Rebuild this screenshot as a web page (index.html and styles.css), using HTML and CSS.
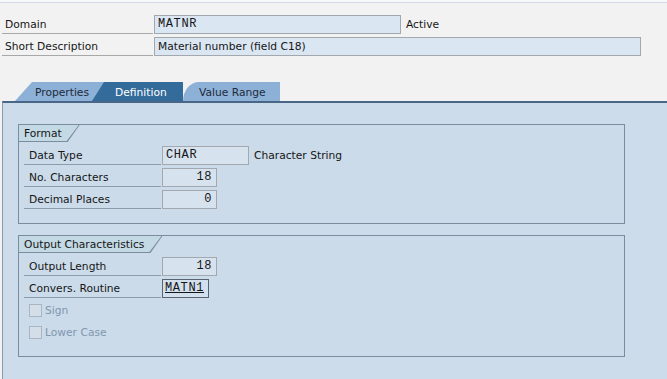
FILE: index.html
```html
<!DOCTYPE html>
<html>
<head>
<meta charset="utf-8">
<link rel="stylesheet" href="styles.css">
</head>
<body>
<div class="topline"></div>
<div class="header">
  <div class="hrow">
    <div class="hlabel">Domain</div>
    <div class="field mono w-domain">MATNR</div>
    <div class="after">Active</div>
  </div>
  <div class="hrow">
    <div class="hlabel">Short Description</div>
    <div class="field w-desc">Material number (field C18)</div>
  </div>
</div>
<div class="tabs">
  <div class="tab tab-props">Properties</div>
  <div class="tab tab-def">Definition</div>
  <div class="tab tab-val">Value Range</div>
</div>
<div class="panel">
  <div class="group g-format">
    <div class="gtitle"><span class="gtext">Format</span></div>
    <div class="grow">
      <div class="glabel">Data Type</div>
      <div class="field mono w-type">CHAR</div>
      <div class="after">Character String</div>
    </div>
    <div class="grow">
      <div class="glabel">No. Characters</div>
      <div class="field mono num w-num">18</div>
    </div>
    <div class="grow">
      <div class="glabel">Decimal Places</div>
      <div class="field mono num w-num">0</div>
    </div>
  </div>
  <div class="group g-output">
    <div class="gtitle"><span class="gtext">Output Characteristics</span></div>
    <div class="grow">
      <div class="glabel">Output Length</div>
      <div class="field mono num w-num">18</div>
    </div>
    <div class="grow">
      <div class="glabel">Convers. Routine</div>
      <div class="field mono link w-conv">MATN1</div>
    </div>
    <div class="grow">
      <div class="check"><span class="box"></span><span class="ctext">Sign</span></div>
    </div>
    <div class="grow">
      <div class="check"><span class="box"></span><span class="ctext">Lower Case</span></div>
    </div>
  </div>
</div>
</body>
</html>
```
FILE: styles.css
```css
html, body {
  margin: 0;
  padding: 0;
}
body {
  width: 667px;
  height: 379px;
  overflow: hidden;
  background: #f2f2f2;
  font-family: "DejaVu Sans", Tahoma, sans-serif;
  font-size: 10.7px;
  color: #161616;
}
.topline {
  height: 2px;
  background: #f6f8fa;
  border-bottom: 1px solid #d3dce6;
}
.header {
  padding: 12px 0 0 2px;
  display: flex;
  flex-direction: column;
  gap: 3px;
}
.hrow {
  display: flex;
  align-items: stretch;
  height: 19px;
}
.hlabel {
  width: 148px;
  padding-left: 3px;
  border-bottom: 1px solid #a8a8a8;
  line-height: 20px;
  margin-right: 1px;
}
.field {
  box-sizing: border-box;
  height: 19px;
  background: #dbe6f3;
  border: 1px solid #a2a8ae;
  line-height: 17px;
  padding: 0 3px;
  white-space: nowrap;
}
.mono {
  font-family: "Liberation Mono", "DejaVu Sans Mono", monospace;
  font-size: 12px;
  letter-spacing: 0.6px;
}
.w-domain { width: 247px; }
.w-desc { width: 487px; }
.after {
  line-height: 20px;
  padding-left: 5px;
}
.tabs {
  margin-top: 26px;
  height: 19px;
  display: flex;
  padding-left: 15px;
}
.tab {
  height: 19px;
  line-height: 21px;
  box-sizing: border-box;
  color: #1d2b3a;
  white-space: nowrap;
}
.tab-props {
  width: 90px;
  background: #8db0d6;
  padding-left: 20px;
  clip-path: polygon(17px 0, 100% 0, 100% 100%, 0 100%);
}
.tab-def {
  width: 91px;
  margin-left: -13px;
  background: #336b9b;
  color: #ffffff;
  padding-left: 23px;
  clip-path: polygon(12px 0, 100% 0, 100% 100%, 0 100%);
}
.tab-val {
  width: 97px;
  background: #8db0d6;
  padding-left: 16px;
  border-top-left-radius: 16px 19px;
}
.panel {
  margin-left: 2px;
  height: 278px;
  background: #cddcea;
  border-top: 2px solid #4a6686;
  border-left: 1px solid #8c9aa8;
  padding: 21px 0 0 15px;
  box-sizing: border-box;
  display: flex;
  flex-direction: column;
  gap: 11px;
}
.group {
  width: 607px;
  box-sizing: border-box;
  border: 1px solid #7b8c9e;
  background: #cbdbe9;
}
.g-format { height: 100px; }
.g-output { height: 122px; }
.gtitle {
  display: inline-block;
  background: #7b8c9e;
  padding: 0 1px 1px 0;
  clip-path: polygon(0 0, 100% 0, calc(100% - 12px) 100%, 0 100%);
  margin-bottom: 4px;
}
.gtext {
  display: block;
  height: 16px;
  line-height: 17px;
  background: #c3d9e4;
  padding: 0 17px 0 5px;
  clip-path: polygon(0 0, 100% 0, calc(100% - 12px) 100%, 0 100%);
}
.grow {
  display: flex;
  height: 19px;
  margin: 0 0 3px 5px;
}
.glabel {
  width: 132px;
  padding-left: 5px;
  border-bottom: 1px solid #8e9caa;
  line-height: 20px;
  margin-right: 1px;
}
.w-type { width: 87px; background: #d6e2ee; }
.w-num { width: 55px; background: #d6e2ee; }
.num { text-align: right; padding-right: 4px; }
.w-conv {
  width: 47px;
  background: #d2e0ed;
  border-color: #5a6470;
  text-decoration: underline;
  padding: 0 2px;
}
.check {
  display: flex;
  align-items: center;
  padding-left: 5px;
  color: #8197b0;
}
.box {
  width: 11px;
  height: 11px;
  border: 1px solid #a9b5c2;
  background: #d4dee8;
  margin-right: 3px;
}
.ctext {
  line-height: 20px;
}
```
